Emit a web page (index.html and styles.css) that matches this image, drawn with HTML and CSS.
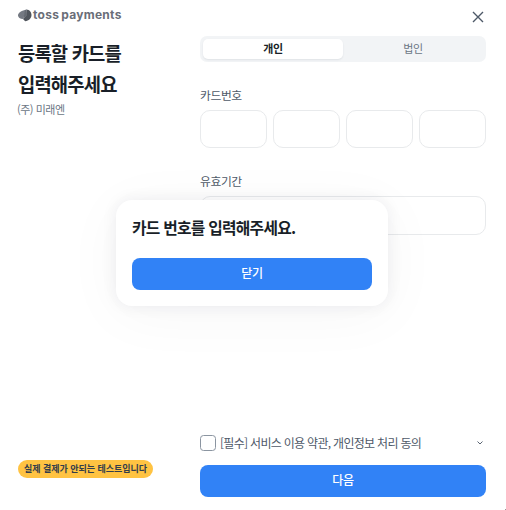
FILE: index.html
```html
<!DOCTYPE html>
<html lang="ko">
<head>
<meta charset="utf-8">
<title>toss payments</title>
<link rel="stylesheet" href="styles.css">
</head>
<body>
<div class="page">
  <aside class="side">
    <div class="brand">
      <svg class="brand-mark" width="14" height="13" viewBox="0 0 14 13" aria-hidden="true">
        <path d="M8.500 .5C3.900 1.400 0 3.600 0 6.300c0 2.200 2.100 3.600 5 3.800z" fill="#747982"/>
        <path d="M8.500 .5C11.500 .8 13.500 3.100 13.500 6c0 3.300-2.700 5.800-6.300 6.200L5 10l3.200-3.500z" fill="#50555c"/>
        <path d="M7 1.500l1.500-1L9 6.500 5 10.100z" fill="#656a72"/>
      </svg>
      <span class="brand-name"><span>toss</span> <span>payments</span></span>
    </div>
    <h1 class="title">등록할 카드를<br>입력해주세요</h1>
    <p class="merchant">(주) 미래엔</p>
    <span class="badge">실제 결제가 안되는 테스트입니다</span>
  </aside>
  <main class="form">
    <div class="top">
      <svg width="12" height="12" viewBox="0 0 12 12" aria-hidden="true"><path d="M1 1l10 10M11 1L1 11" fill="none" stroke="#4e5968" stroke-width="1.4"/></svg>
    </div>
    <div class="tabs"><span class="tab active">개인</span><span class="tab">법인</span></div>
    <div class="label">카드번호</div>
    <div class="numbers"><i class="field"></i><i class="field"></i><i class="field"></i><i class="field"></i></div>
    <div class="label">유효기간</div>
    <i class="field expiry"></i>
    <div class="bottom">
      <div class="agree">
        <i class="check"></i><span class="agree-text">[필수] 서비스 이용 약관, 개인정보 처리 동의</span>
        <svg class="chevron" width="6" height="4" viewBox="0 0 6 4" aria-hidden="true"><path d="M.5 .5L3 3 5.500 .5" fill="none" stroke="#5a6472" stroke-width="1"/></svg>
      </div>
      <button class="button">다음</button>
    </div>
  </main>
  <div class="dialog" role="dialog">
    <p class="message">카드 번호를 입력해주세요.</p>
    <button class="button">닫기</button>
  </div>
  <i class="corner"></i>
</div>
</body>
</html>
```
FILE: styles.css
```css
* { box-sizing: border-box; }
body { margin: 0; background: #fff; font-family: "Noto Sans CJK KR", sans-serif; }
i { display: block; }
.page { position: relative; display: flex; width: 506px; height: 510px; overflow: hidden; white-space: nowrap; }
.side { width: 200px; padding: 8px 18px 32px; display: flex; flex-direction: column; align-items: flex-start; }
.brand { display: flex; align-items: center; height: 14px; }
.brand-name { display: flex; gap: 2px; margin-left: 1px; font: 700 12px/14px Inter, sans-serif; letter-spacing: .28px; color: #6a6e78; }
.title { margin: 16px 0 0; font-size: 18.800px; line-height: 31px; font-weight: 700; letter-spacing: -.85px; color: #191f28; position: relative; top: -1px; }
.merchant { margin: 0 0 0 -1px; font-size: 11px; line-height: 18px; letter-spacing: -.5px; color: #6b7684; }
.badge { margin-top: auto; height: 18px; width: 135px; border-radius: 9px; background: #ffc342; font-size: 9px; line-height: 17px; font-weight: 700; letter-spacing: -.04px; text-align: center; color: #333d4b; }
.form { width: 286px; display: flex; flex-direction: column; padding-bottom: 13px; }
.top { height: 36px; display: flex; justify-content: flex-end; padding: 11px 2px 0 0; }
.tabs { display: flex; height: 26px; padding: 3px; border-radius: 7px; background: #f2f4f6; }
.tab { flex: 1; height: 20px; border-radius: 5px; font-size: 11px; line-height: 18px; letter-spacing: -.4px; text-align: center; color: #6b7684; }
.active { background: #fff; font-weight: 700; color: #191f28; box-shadow: 0 1px 2px #00173314; }
.label { margin-top: 24px; height: 24px; font-size: 11.800px; line-height: 18px; letter-spacing: -.4px; color: #4e5968; }
.numbers { display: grid; grid-template-columns: repeat(4, 1fr); gap: 6.600px; }
.field { height: 38px; flex: none; border: 1px solid #e8eaec; border-radius: 10px; }
.expiry { height: 39px; }
.bottom { margin-top: auto; }
.agree { display: flex; align-items: center; height: 16px; margin-bottom: 14px; padding-right: 3px; }
.check { width: 16px; height: 16px; border: 1.500px solid #8b95a1; border-radius: 3.500px; }
.agree-text { margin-left: 4px; font-size: 12px; line-height: 18px; letter-spacing: -.7px; color: #4e5968; }
.chevron { margin-left: auto; }
.button { display: block; width: 100%; height: 32px; border: 0; padding: 0 0 2px; border-radius: 8px; background: #3182f6; color: #fff; font: 500 12px/18px "Noto Sans CJK KR", sans-serif; letter-spacing: -.4px; }
.dialog { position: absolute; left: 116px; top: 200px; width: 272px; height: 106px; padding: 16px; border-radius: 16px; background: #fff; box-shadow: 0 0 16px #00173312, 0 8px 60px #0017330a; }
.message { margin: 0 0 18px; font-size: 15.800px; line-height: 23px; height: 24px; font-weight: 700; letter-spacing: -.75px; color: #191f28; }
.corner { position: absolute; right: 0; bottom: 0; width: 1px; height: 1px; background: #999; }
```
